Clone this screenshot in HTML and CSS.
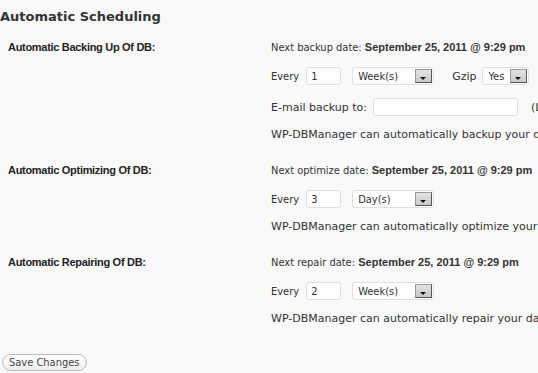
FILE: index.html
```html
<!DOCTYPE html>
<html lang="en">
<head>
    <meta charset="UTF-8">
    <title>Automatic Scheduling</title>
    <link rel="stylesheet" href="styles.css">
</head>
<body>
    <h3 class="title">Automatic Scheduling</h3>

    <div class="form-row">
        <div class="label">Automatic Backing Up Of DB:</div>
        <div class="field">
            <p class="next">Next backup date: <strong>September 25, 2011 @ 9:29 pm</strong></p>
            <p class="controls">
                Every <input type="text" class="num" value="1">
                <span class="select wide"><span class="val">Week(s)</span><span class="arrow"></span></span>
                <span class="gzip">Gzip</span>
                <span class="select narrow"><span class="val">Yes</span><span class="arrow"></span></span>
            </p>
            <p class="controls email-row">
                E-mail backup to: <input type="text" class="email" value="">
                <span class="hint">(Leave blank to disable this feature)</span>
            </p>
            <p class="desc">WP-DBManager can automatically backup your database after a certain period.</p>
        </div>
    </div>

    <div class="form-row">
        <div class="label">Automatic Optimizing Of DB:</div>
        <div class="field">
            <p class="next">Next optimize date: <strong>September 25, 2011 @ 9:29 pm</strong></p>
            <p class="controls">
                Every <input type="text" class="num" value="3">
                <span class="select wide"><span class="val">Day(s)</span><span class="arrow"></span></span>
            </p>
            <p class="desc">WP-DBManager can automatically optimize your database after a certain period.</p>
        </div>
    </div>

    <div class="form-row">
        <div class="label">Automatic Repairing Of DB:</div>
        <div class="field">
            <p class="next">Next repair date: <strong>September 25, 2011 @ 9:29 pm</strong></p>
            <p class="controls">
                Every <input type="text" class="num" value="2">
                <span class="select wide"><span class="val">Week(s)</span><span class="arrow"></span></span>
            </p>
            <p class="desc">WP-DBManager can automatically repair your database after a certain period.</p>
        </div>
    </div>

    <p class="submit"><button class="button">Save Changes</button></p>
</body>
</html>
```

FILE: styles.css
```css
body {
    margin: 0;
    background-color: #f9f9f9;
    color: #333;
    font-family: "DejaVu Sans Condensed", "DejaVu Sans", sans-serif;
    font-size: 11px;
    overflow: hidden;
    white-space: nowrap;
}

p {
    margin: 0;
}

.title {
    margin: 0;
    padding-top: 7px;
    height: 19px;
    line-height: 19px;
    font-family: "DejaVu Sans", sans-serif;
    font-size: 13px;
    font-weight: bold;
    color: #333;
}

.form-row {
    display: grid;
    grid-template-columns: 263px 1fr;
    padding-left: 8px;
    padding-top: 12px;
}

.form-row + .form-row {
    padding-top: 17px;
}

.label {
    font-family: "Liberation Sans", Arial, sans-serif;
    font-weight: bold;
    letter-spacing: -0.3px;
    line-height: 18px;
    color: #222;
}

.next {
    line-height: 18px;
}

.next strong {
    font-family: "Liberation Sans", Arial, sans-serif;
    color: #333;
}

.controls {
    display: flex;
    align-items: center;
    height: 18px;
    margin-top: 10px;
}

.email-row {
    margin-top: 13px;
    font-family: "DejaVu Sans", sans-serif;
}

input {
    box-sizing: border-box;
    height: 18px;
    border: 1px solid #dfdfdf;
    border-radius: 3px;
    background: #fff;
    font-family: inherit;
    font-size: 11px;
    color: #333;
    padding: 0 4px;
}

.num {
    width: 35px;
    margin-left: 7px;
    margin-right: 11px;
}

.email {
    width: 145px;
    margin-left: 6px;
    margin-right: 13px;
}

.select {
    box-sizing: border-box;
    display: flex;
    align-items: center;
    justify-content: space-between;
    height: 18px;
    padding: 0 1px 0 5px;
    border: 1px solid #dfdfdf;
    border-radius: 3px;
    background: #fff;
}

.select.wide {
    width: 82px;
}

.select.narrow {
    width: 47px;
}

.arrow {
    box-sizing: border-box;
    position: relative;
    width: 17px;
    height: 14px;
    border: 1px solid #555;
    border-top-color: #999;
    border-left-color: #999;
    background: linear-gradient(#e4e4e4, #c8c8c8);
}

.arrow::after {
    content: "";
    position: absolute;
    left: 4px;
    bottom: 2px;
    border-left: 3px solid transparent;
    border-right: 3px solid transparent;
    border-top: 3px solid #111;
}

.gzip {
    font-family: "DejaVu Sans", sans-serif;
    margin-left: 18px;
    margin-right: 6px;
}

.desc {
    font-family: "DejaVu Sans", sans-serif;
    line-height: 18px;
    margin-top: 10px;
}

.submit {
    padding: 26px 0 0 2px;
}

.button {
    height: 17px;
    padding: 0 6px;
    border: 1px solid #bbb;
    border-radius: 11px;
    background: linear-gradient(#fff, #efefef);
    color: #464646;
    font-family: inherit;
    font-size: 11px;
    line-height: 15px;
}
```
